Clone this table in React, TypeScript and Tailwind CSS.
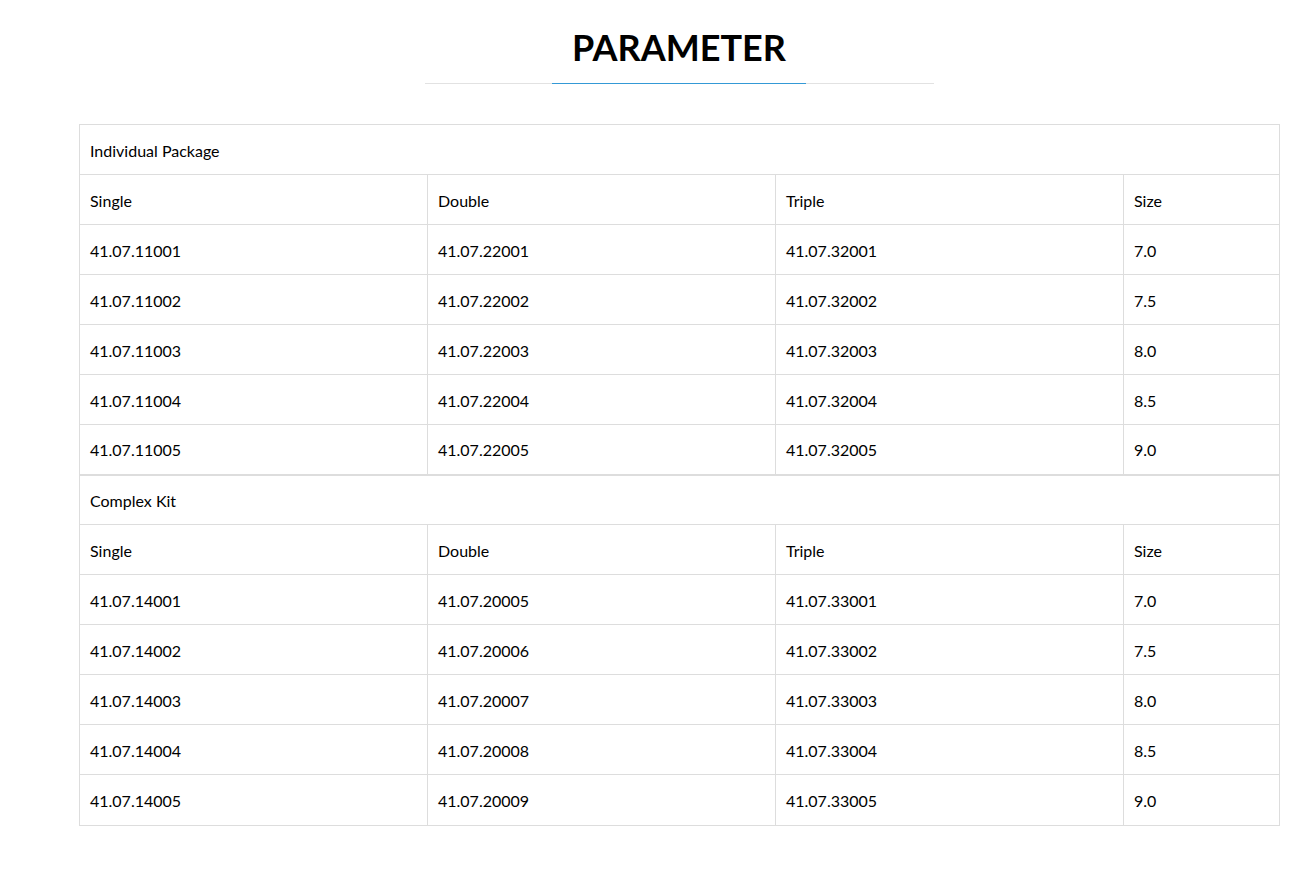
const sections = [
  {
    title: 'Individual Package',
    rows: [
      ['41.07.11001', '41.07.22001', '41.07.32001', '7.0'],
      ['41.07.11002', '41.07.22002', '41.07.32002', '7.5'],
      ['41.07.11003', '41.07.22003', '41.07.32003', '8.0'],
      ['41.07.11004', '41.07.22004', '41.07.32004', '8.5'],
      ['41.07.11005', '41.07.22005', '41.07.32005', '9.0'],
    ],
  },
  {
    title: 'Complex Kit',
    rows: [
      ['41.07.14001', '41.07.20005', '41.07.33001', '7.0'],
      ['41.07.14002', '41.07.20006', '41.07.33002', '7.5'],
      ['41.07.14003', '41.07.20007', '41.07.33003', '8.0'],
      ['41.07.14004', '41.07.20008', '41.07.33004', '8.5'],
      ['41.07.14005', '41.07.20009', '41.07.33005', '9.0'],
    ],
  },
];

const headers = ['Single', 'Double', 'Triple', 'Size'];

export default function App() {
  return (
    <div className="min-h-screen bg-white font-['Lato','Liberation_Sans',sans-serif] text-black">
      <div className="ml-[79px] w-[1200px] pb-11">
        {/* Heading */}
        <div className="flex flex-col items-center pt-[25px]">
          <h2 className="text-[36px] font-bold leading-[44px]">PARAMETER</h2>
          <div className="mt-[14px] flex h-px w-[509px] bg-[#e2e2e2]">
            <div className="mx-auto h-px w-[254px] bg-[#3499d6]" />
          </div>
        </div>

        <table className="mt-10 w-full table-fixed border-collapse text-[16px]">
          <colgroup>
            <col className="w-[348px]" />
            <col className="w-[348px]" />
            <col className="w-[348px]" />
            <col className="w-[156px]" />
          </colgroup>
          {sections.map((section, si) => (
            <tbody key={section.title} className={si > 0 ? 'border-t-2 border-[#dddddd]' : ''}>
              <tr className="h-[50px]">
                <td colSpan={4} className="border border-[#dddddd] px-[10px] pt-[2px] align-middle">
                  {section.title}
                </td>
              </tr>
              <tr className="h-[50px]">
                {headers.map((h) => (
                  <td key={h} className="border border-[#dddddd] px-[10px] pt-[2px] align-middle">
                    {h}
                  </td>
                ))}
              </tr>
              {section.rows.map((row, ri) => (
                <tr key={row[0]} className={si > 0 && ri === section.rows.length - 1 ? 'h-[51px]' : 'h-[50px]'}>
                  {row.map((cell, i) => (
                    <td key={i} className="border border-[#dddddd] px-[10px] pt-[2px] align-middle">
                      {cell}
                    </td>
                  ))}
                </tr>
              ))}
            </tbody>
          ))}
        </table>
      </div>
    </div>
  );
}
